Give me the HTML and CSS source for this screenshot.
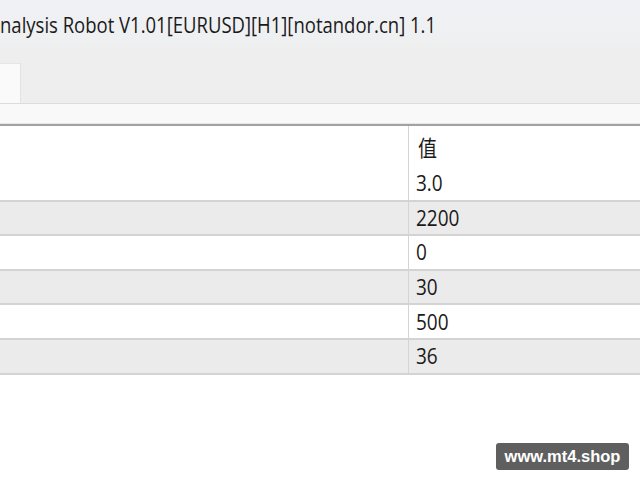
FILE: index.html
```html
<!DOCTYPE html>
<html>
<head>
<meta charset="utf-8">
<link rel="stylesheet" href="styles.css">
</head>
<body>
<div class="window">
  <div class="titlebar"><span class="title">nalysis Robot V1.01[EURUSD][H1][notandor.cn] 1.1</span></div>
  <div class="tabs"><div class="tab"></div></div>
  <div class="strip"></div>
  <div class="grid">
    <div class="row head"><div class="c1"></div><div class="c2"><span class="t">值</span></div></div>
    <div class="row first"><div class="c1"></div><div class="c2"><span class="t">3.0</span></div></div>
    <div class="row alt"><div class="c1"></div><div class="c2"><span class="t">2200</span></div></div>
    <div class="row"><div class="c1"></div><div class="c2"><span class="t">0</span></div></div>
    <div class="row alt"><div class="c1"></div><div class="c2"><span class="t">30</span></div></div>
    <div class="row"><div class="c1"></div><div class="c2"><span class="t">500</span></div></div>
    <div class="row alt"><div class="c1"></div><div class="c2"><span class="t">36</span></div></div>
  </div>
</div>
<div class="badge">www.mt4.shop</div>
</body>
</html>
```

FILE: styles.css
```css
html, body {
  margin: 0;
  padding: 0;
  background: #ffffff;
  width: 640px;
  height: 480px;
  overflow: hidden;
  font-family: "Open Sans", "Noto Sans CJK SC", sans-serif;
  color: #1a1a1a;
}
.window {
  display: flex;
  flex-direction: column;
}
.titlebar {
  height: 52px;
  background: linear-gradient(#f0f1f4, #eff0f2 70%, #eeeeee);
  display: flex;
  align-items: center;
}
.title {
  display: inline-block;
  font-size: 18.5px;
  transform: scaleY(1.15);
  margin-top: -4px;
  white-space: nowrap;
}
.tabs {
  height: 51px;
  background: #eeeeee;
  border-bottom: 1px solid #dcdcdc;
  display: flex;
  align-items: flex-end;
}
.tab {
  width: 20px;
  height: 39px;
  background: #fafafa;
  border-right: 1px solid #e2e2e2;
  border-top: 1px solid #e6e6e6;
}
.strip {
  height: 19px;
  background: #f9f9f9;
  border-bottom: 1px solid #e6e6e6;
}
.grid {
  border-top: 2px solid #a2a2a2;
  display: flex;
  flex-direction: column;
}
.row {
  display: flex;
  height: 34.6px;
  box-sizing: border-box;
  border-bottom: 2px solid #d3d3d3;
  background: #ffffff;
}
.row.head {
  height: 41px;
  border-bottom: none;
}
.row.alt {
  background: #ebebeb;
}
.c1 {
  width: 408px;
  border-right: 1px solid #d4d4d4;
}
.c2 {
  flex: 1;
  display: flex;
  align-items: center;
  padding-left: 7px;
}
.head .c2 {
  padding-left: 9px;
}
.t {
  display: inline-block;
  font-size: 19px;
  transform: scaleY(1.15);
}
.badge {
  position: absolute;
  left: 496px;
  top: 443px;
  width: 133px;
  height: 27px;
  box-sizing: border-box;
  background: #5f5f5f;
  border-radius: 3px;
  color: #ffffff;
  font-family: "Liberation Sans", Arial, sans-serif;
  font-weight: bold;
  font-size: 16.5px;
  display: flex;
  align-items: center;
  justify-content: center;
}
```
